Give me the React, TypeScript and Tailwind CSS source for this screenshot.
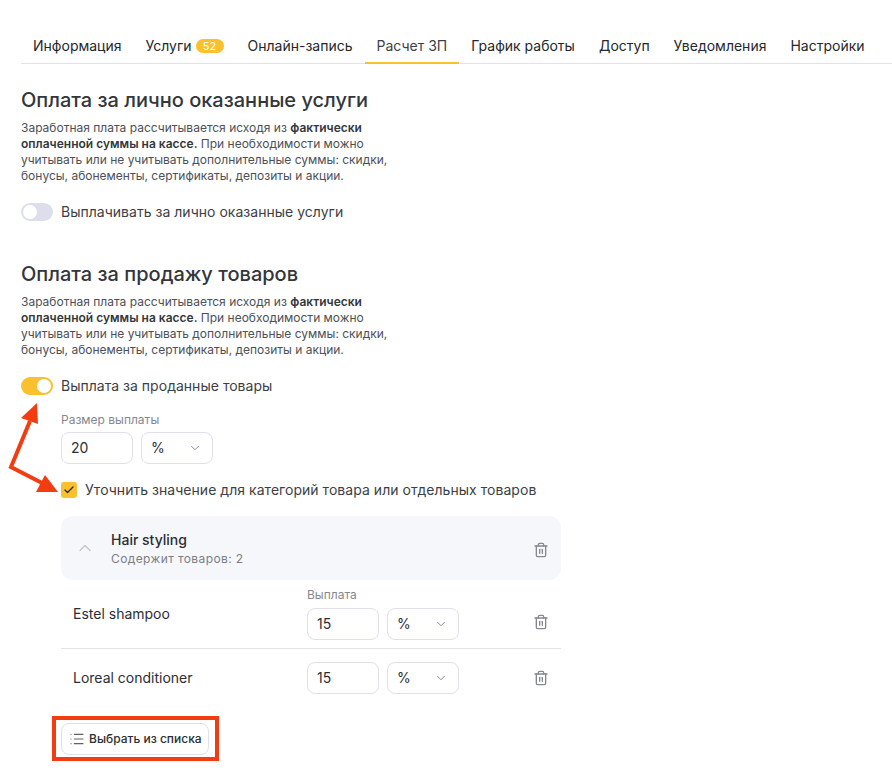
import React from 'react';
import { ChevronDown, ChevronUp, Check, Trash2, List } from 'lucide-react';

const tabs = ['Информация', 'Услуги', 'Онлайн-запись', 'Расчет ЗП', 'График работы', 'Доступ', 'Уведомления', 'Настройки'];

const Tabs = () => (
  <div className="flex border-b border-[#e1e2ea] h-[37px]">
    {tabs.map((t) => (
      <div
        key={t}
        className={`px-3 h-[37px] flex items-center gap-1 text-sm ${t === 'Расчет ЗП' ? 'border-b-2 border-[#fbc02d] text-[#3c3f45] pt-[2px]' : 'text-[#24272b]'}`}
      >
        {t}
        {t === 'Услуги' && (
          <span className="h-[14px] w-[28px] rounded-full bg-[#fbc02d] text-white text-[11px] leading-[14px] text-center">52</span>
        )}
      </div>
    ))}
  </div>
);

const Desc = () => (
  <p className="text-xs leading-4 text-[#4d5057] w-[380px]">
    Заработная плата рассчитывается исходя из <b className="font-semibold text-[#34373c]">фактически оплаченной суммы на кассе.</b> При необходимости можно учитывать или не учитывать дополнительные суммы: скидки, бонусы, абонементы, сертификаты, депозиты и акции.
  </p>
);

const Toggle = ({ on }: { on?: boolean }) => (
  <div className={`w-8 h-[18px] rounded-full flex items-center px-[2px] ${on ? 'bg-[#fbc02d] justify-end' : 'bg-[#dcdfeb] justify-start'}`}>
    <div className="w-[14px] h-[14px] rounded-full bg-white" />
  </div>
);

const Field = ({ value }: { value: string }) => (
  <div className="flex gap-2">
    <div className="w-[72px] h-8 rounded-lg border border-[#dfe0ea] pl-[9px] flex items-center text-sm text-[#2b2e33]">{value}</div>
    <div className="w-[72px] h-8 rounded-lg border border-[#dfe0ea] pl-[9px] pr-[10px] flex items-center justify-between text-sm text-[#2b2e33]">
      %
      <ChevronDown size={14} strokeWidth={1.5} className="text-[#7b7e86]" />
    </div>
  </div>
);

const Trash = () => <Trash2 size={16} strokeWidth={2} className="text-[#85888f]" />;

const App = () => (
  <div className="relative w-[892px] h-[774px] bg-white overflow-hidden pt-[27px] pl-[21px] font-['Inter',sans-serif] text-[#2b2e33]">
    <Tabs />

    <h2 className="mt-[24px] text-xl leading-6 font-medium text-[#33363b]">Оплата за лично оказанные услуги</h2>
    <div className="mt-[8px]"><Desc /></div>
    <div className="mt-[18px] flex items-center gap-2 text-sm tracking-[0.02px]"><Toggle /><span className="text-[#3c3f45]">Выплачивать за лично оказанные услуги</span></div>

    <h2 className="mt-[40px] text-xl leading-6 font-medium text-[#33363b]">Оплата за продажу товаров</h2>
    <div className="mt-[8px]"><Desc /></div>
    <div className="mt-[18px] flex items-center gap-2 text-sm tracking-[0.02px]"><Toggle on /><span className="text-[#3c3f45]">Выплата за проданные товары</span></div>

    <div className="ml-10 mt-[16px]">
      <div className="text-xs leading-4 text-[#85888f] mb-1">Размер выплаты</div>
      <Field value="20" />

      <div className="mt-[16px] flex items-center gap-2 text-sm tracking-[0.035px] text-[#3c3f45]">
        <div className="w-4 h-4 rounded-[3px] bg-[#fbc02d] flex items-center justify-center">
          <Check size={12} strokeWidth={2.5} className="text-[#24272b]" />
        </div>
        Уточнить значение для категорий товара или отдельных товаров
      </div>

      <div className="mt-[16px] w-[500px] h-16 rounded-xl bg-[#f6f7fb] flex items-center pl-[14px] pr-[12px]">
        <ChevronUp size={20} strokeWidth={1.5} className="text-[#c2c4cc]" />
        <div className="ml-[16px] flex-1">
          <div className="text-sm leading-5 font-medium text-[#2b2e33]">Hair styling</div>
          <div className="text-xs leading-4 mt-[1px] tracking-[0.4px] text-[#7b7e86]">Содержит товаров: 2</div>
        </div>
        <div className="mt-1"><Trash /></div>
      </div>

      <div className="w-[500px] h-[69px] border-b border-[#e1e2ea] flex items-end pb-[8px] pl-3 pr-[12px]">
        <div className="w-[234px] text-sm self-center mt-2 text-[#2b2e33]">Estel shampoo</div>
        <div className="flex-1">
          <div className="text-xs leading-4 text-[#85888f] mb-[5px]">Выплата</div>
          <Field value="15" />
        </div>
        <div className="mb-[10px]"><Trash /></div>
      </div>
      <div className="w-[500px] h-[58px] flex items-center pl-3 pr-[12px]">
        <div className="w-[234px] text-sm text-[#2b2e33]">Loreal conditioner</div>
        <div className="flex-1"><Field value="15" /></div>
        <Trash />
      </div>

      <div className="mt-[16px] w-[148px] h-8 rounded-lg border border-[#dfe0ea] flex items-center gap-1 pl-[7px] text-xs font-medium text-[#2b2e33]">
        <List size={16} strokeWidth={1.75} className="text-[#5f6269]" />
        Выбрать из списка
      </div>
    </div>

    {/* annotation overlay */}
    <div className="absolute left-[52px] top-[716px] w-[167px] h-[45px] border-[4px] border-[#f33c12]" />
    <svg className="absolute left-0 top-0" width="892" height="774" fill="none">
      <path d="M30 421 L11 467 L42 483" stroke="#f33c12" strokeWidth="4" strokeLinejoin="miter" />
      <path d="M37 403 L21 418 L38 424 Z" fill="#f33c12" />
      <path d="M58 492 L36 492 L45 475 Z" fill="#f33c12" />
    </svg>
  </div>
);

export default App;
